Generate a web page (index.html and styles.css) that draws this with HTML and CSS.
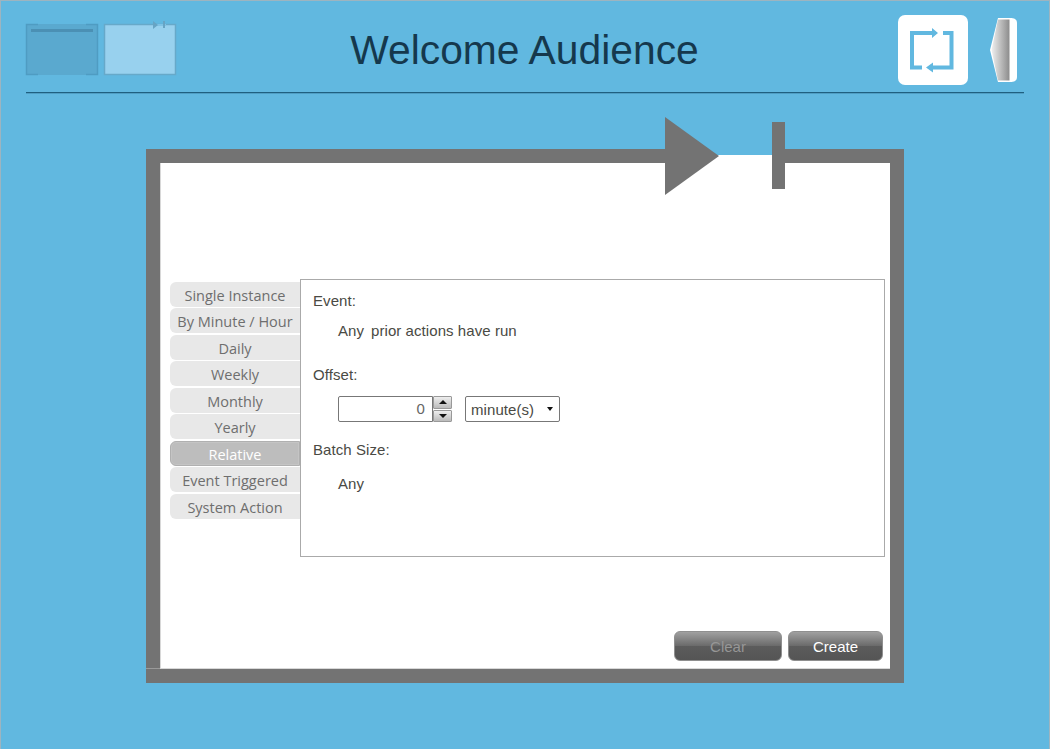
FILE: index.html
```html
<!DOCTYPE html>
<html lang="en">
<head>
<meta charset="UTF-8">
<title>Welcome Audience</title>
<link rel="stylesheet" href="styles.css">
</head>
<body>

<header class="top">
    <div class="thumbs">
        <svg class="thumb" width="72" height="51" viewBox="0 0 72 51">
            <rect x="0" y="0" width="72" height="51" fill="#5aa9cf"/>
            <path d="M12 0.500H0.500V50.500H12M60 0.500H71.500V50.500H60" fill="none" stroke="#4f9cc2" stroke-width="1.500"/>
            <rect x="5" y="5" width="62" height="3" fill="#4b90b4"/>
        </svg>
        <svg class="thumb" width="72" height="51" viewBox="0 0 72 51">
            <rect x="0.500" y="0.500" width="71" height="50" fill="#98d1ee" stroke="#67a9c9" stroke-width="1.500"/>
            <rect x="49" y="0" width="13" height="2" fill="#7fc2e4"/>
            <path d="M49 -3L54 1L49 5Z" fill="#67a4c4"/>
            <rect x="59" y="-3" width="2" height="7" fill="#67a4c4"/>
        </svg>
    </div>
    <h1>Welcome Audience</h1>
    <div class="tools">
        <div class="tool-switch">
            <svg width="46" height="45" viewBox="0 0 46 45">
                <path d="M23 5H2V39.500H12M33 5H41.500V39.500H22" fill="none" stroke="#61b8e0" stroke-width="4"/>
                <path d="M22 0L28 5L22 10Z M23 34.500L16 39.500L23 44.500Z" fill="#61b8e0"/>
            </svg>
        </div>
        <svg class="tool-handle" width="28" height="66" viewBox="0 0 28 66">
            <defs>
                <linearGradient id="handle" x1="0" x2="1" y1="0" y2="0">
                    <stop offset="0" stop-color="#f0f0f0"/>
                    <stop offset="1" stop-color="#8c8c8c"/>
                </linearGradient>
            </defs>
            <path d="M8 1H20C24 1 27 2 27 6V60C27 64 24 65 20 65H8L0 33Z" fill="#fff"/>
            <path d="M8 2.500H19.500V63.500H8L1.500 33Z" fill="url(#handle)"/>
        </svg>
    </div>
</header>

<main class="frame">
    <div class="marker">
        <span class="marker-gap"></span>
        <span class="marker-play"></span>
        <span class="marker-stop"></span>
    </div>
    <div class="schedule">
        <nav class="tabs">
            <a class="tab">Single Instance</a>
            <a class="tab">By Minute / Hour</a>
            <a class="tab">Daily</a>
            <a class="tab">Weekly</a>
            <a class="tab">Monthly</a>
            <a class="tab">Yearly</a>
            <a class="tab active">Relative</a>
            <a class="tab">Event Triggered</a>
            <a class="tab">System Action</a>
        </nav>
        <section class="panel">
            <div class="label">Event:</div>
            <div class="value"><span class="value-any">Any</span>prior actions have run</div>
            <div class="label label-offset">Offset:</div>
            <div class="offset-row">
                <div class="spinner">
                    <span class="spinner-value">0</span>
                    <span class="spinner-btns">
                        <span class="spin"><i class="up"></i></span>
                        <span class="spin"><i class="down"></i></span>
                    </span>
                </div>
                <div class="select">minute(s)<i class="down"></i></div>
            </div>
            <div class="label label-batch">Batch Size:</div>
            <div class="value value-batch">Any</div>
        </section>
    </div>
    <div class="actions">
        <button class="btn" disabled>Clear</button>
        <button class="btn btn-create">Create</button>
    </div>
</main>

</body>
</html>
```

FILE: styles.css
```css
html, body {
    margin: 0;
    padding: 0;
}
body {
    box-sizing: border-box;
    height: 749px;
    background: #61b8e0;
    border: 1px solid #9db4c0;
    border-bottom: none;
    font-family: "Liberation Sans", Arial, sans-serif;
    color: #444;
    overflow: hidden;
}
.top {
    display: grid;
    grid-template-columns: 1fr auto 1fr;
    align-items: center;
    box-sizing: border-box;
    height: 92px;
    padding-top: 7px;
    margin: 0 25px;
    border-bottom: 1px solid #1f5f80;
    box-shadow: 0 1px 0 #4f9ec4;
}
.thumbs {
    display: flex;
    gap: 6px;
    margin-top: -2px;
}
.thumb {
    overflow: visible;
}
h1 {
    margin: 0 1px 0 0;
    font-size: 40.800px;
    font-weight: normal;
    color: #15384d;
}
.tools {
    display: flex;
    justify-content: flex-end;
    align-items: center;
    gap: 22px;
    margin-right: 6px;
}
.tool-switch {
    width: 70px;
    height: 70px;
    background: #fff;
    border-radius: 7px;
    display: flex;
    align-items: center;
    justify-content: center;
}
.tool-switch svg {
    overflow: visible;
}
.frame {
    position: relative;
    box-sizing: border-box;
    width: 758px;
    height: 534px;
    margin: 56px 0 0 145px;
    background: #fff;
    border: 14px solid #737373;
    padding: 116px 5px 0 10px;
    box-shadow: inset 1px -1px 0 #d8d8d8;
}
.frame::after {
    content: "";
    position: absolute;
    left: -14px;
    bottom: 0;
    width: 14px;
    height: 1px;
    background: #9a9a9a;
}
.marker-gap {
    position: absolute;
    left: 545px;
    top: -8px;
    width: 70px;
    height: 8px;
    background: #fff;
}
.marker-gap::before {
    content: "";
    position: absolute;
    left: 0;
    right: 0;
    top: -6px;
    height: 6px;
    background: #61b8e0;
}
.marker-play {
    position: absolute;
    left: 505px;
    top: -46px;
    width: 0;
    height: 0;
    border-style: solid;
    border-width: 39px 0 39px 54px;
    border-color: transparent transparent transparent #737373;
}
.marker-stop {
    position: absolute;
    left: 612px;
    top: -41px;
    width: 13px;
    height: 67px;
    background: #737373;
}
.schedule {
    display: flex;
    align-items: flex-start;
}
.tabs {
    display: flex;
    flex-direction: column;
    width: 130px;
    padding-top: 2.900px;
    font-family: "Open Sans", sans-serif;
    font-size: 14.500px;
}
.tab {
    box-sizing: border-box;
    height: 25px;
    margin-bottom: 1.500px;
    line-height: 27px;
    text-align: center;
    white-space: nowrap;
    color: #6e6e6e;
    background: #e8e8e8;
    border-radius: 6px 0 0 6px;
}
.tab.active {
    background: #bdbdbd;
    color: #fff;
    border: 1px solid #b0b0b0;
    box-shadow: inset 0 0 0 1px #c4c4c4;
    line-height: 25px;
}
.panel {
    box-sizing: border-box;
    width: 585px;
    height: 278px;
    border: 1px solid #aaa;
    padding: 12px;
    font-size: 15px;
    letter-spacing: 0.070px;
    color: #4a4a44;
}
.label {
    line-height: 18px;
}
.value {
    margin: 12px 0 0 25px;
    line-height: 18px;
}
.value-any {
    display: inline-block;
    width: 33px;
}
.label-offset {
    margin-top: 26px;
}
.offset-row {
    display: flex;
    gap: 13px;
    margin: 12px 0 0 25px;
}
.spinner {
    display: flex;
    box-sizing: border-box;
    width: 114px;
    height: 26px;
}
.spinner-value {
    flex: 1;
    border: 1px solid #777;
    border-radius: 2px 0 0 2px;
    text-align: right;
    padding-right: 7px;
    line-height: 24px;
    color: #666;
    font-size: 15px;
}
.spinner-btns {
    display: flex;
    flex-direction: column;
    width: 19px;
    gap: 1px;
}
.spin {
    flex: 1;
    display: flex;
    align-items: center;
    justify-content: center;
    background: linear-gradient(#eee, #bbb);
    border: 1px solid #999;
    border-radius: 1px;
}
.up, .down {
    width: 0;
    height: 0;
    border-left: 4px solid transparent;
    border-right: 4px solid transparent;
}
.up {
    border-bottom: 4px solid #111;
}
.down {
    border-top: 4px solid #111;
}
.select {
    display: flex;
    align-items: center;
    justify-content: space-between;
    box-sizing: border-box;
    width: 95px;
    height: 26px;
    border: 1px solid #777;
    border-radius: 2px;
    padding: 0 6px 0 5px;
    font-size: 15px;
    color: #4a4a44;
}
.select .down {
    border-left-width: 3px;
    border-right-width: 3px;
}
.label-batch {
    margin-top: 19px;
}
.value-batch {
    margin-top: 16px;
}
.actions {
    display: flex;
    justify-content: flex-end;
    gap: 6px;
    margin-top: 74px;
    padding-right: 2px;
}
.btn {
    box-sizing: border-box;
    width: 108px;
    height: 30px;
    border: 1px solid #8f8f8f;
    border-radius: 6px;
    background: linear-gradient(#a0a0a0, #6a6a6a 50%, #5c5c5c 50%, #555);
    color: #fff;
    font-family: "Liberation Sans", Arial, sans-serif;
    font-size: 15px;
    padding: 0;
}
.btn[disabled] {
    color: #969696;
}
.btn-create {
    width: 95px;
}
```
